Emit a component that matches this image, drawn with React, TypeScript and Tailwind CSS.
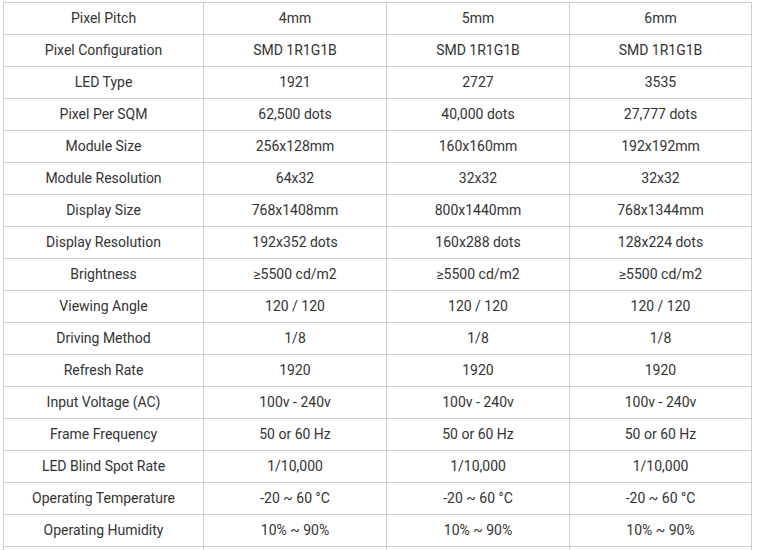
const rows: string[][] = [
  ["Pixel Pitch", "4mm", "5mm", "6mm"],
  ["Pixel Configuration", "SMD 1R1G1B", "SMD 1R1G1B", "SMD 1R1G1B"],
  ["LED Type", "1921", "2727", "3535"],
  ["Pixel Per SQM", "62,500 dots", "40,000 dots", "27,777 dots"],
  ["Module Size", "256x128mm", "160x160mm", "192x192mm"],
  ["Module Resolution", "64x32", "32x32", "32x32"],
  ["Display Size", "768x1408mm", "800x1440mm", "768x1344mm"],
  ["Display Resolution", "192x352 dots", "160x288 dots", "128x224 dots"],
  ["Brightness", "≥5500 cd/m2", "≥5500 cd/m2", "≥5500 cd/m2"],
  ["Viewing Angle", "120 / 120", "120 / 120", "120 / 120"],
  ["Driving Method", "1/8", "1/8", "1/8"],
  ["Refresh Rate", "1920", "1920", "1920"],
  ["Input Voltage (AC)", "100v - 240v", "100v - 240v", "100v - 240v"],
  ["Frame Frequency", "50 or 60 Hz", "50 or 60 Hz", "50 or 60 Hz"],
  ["LED Blind Spot Rate", "1/10,000", "1/10,000", "1/10,000"],
  ["Operating Temperature", "-20 ~ 60 °C", "-20 ~ 60 °C", "-20 ~ 60 °C"],
  ["Operating Humidity", "10% ~ 90%", "10% ~ 90%", "10% ~ 90%"],
  // next row only shows its top edge in the frame
  ["", "", "", ""],
];

export default function App() {
  return (
    <div className="bg-white pl-[3px] pt-[2px] font-['Roboto',sans-serif] text-[14px] text-[#333]">
      <div className="grid w-[749px] grid-cols-[199px_182px_182px_181px] gap-px bg-[#cfcfcf] p-px">
        {rows.map((row, i) =>
          row.map((cell, j) => (
            <div
              key={`${i}_${j}`}
              className="flex h-[31px] items-center justify-center bg-white"
            >
              {cell}
            </div>
          ))
        )}
      </div>
    </div>
  );
}
